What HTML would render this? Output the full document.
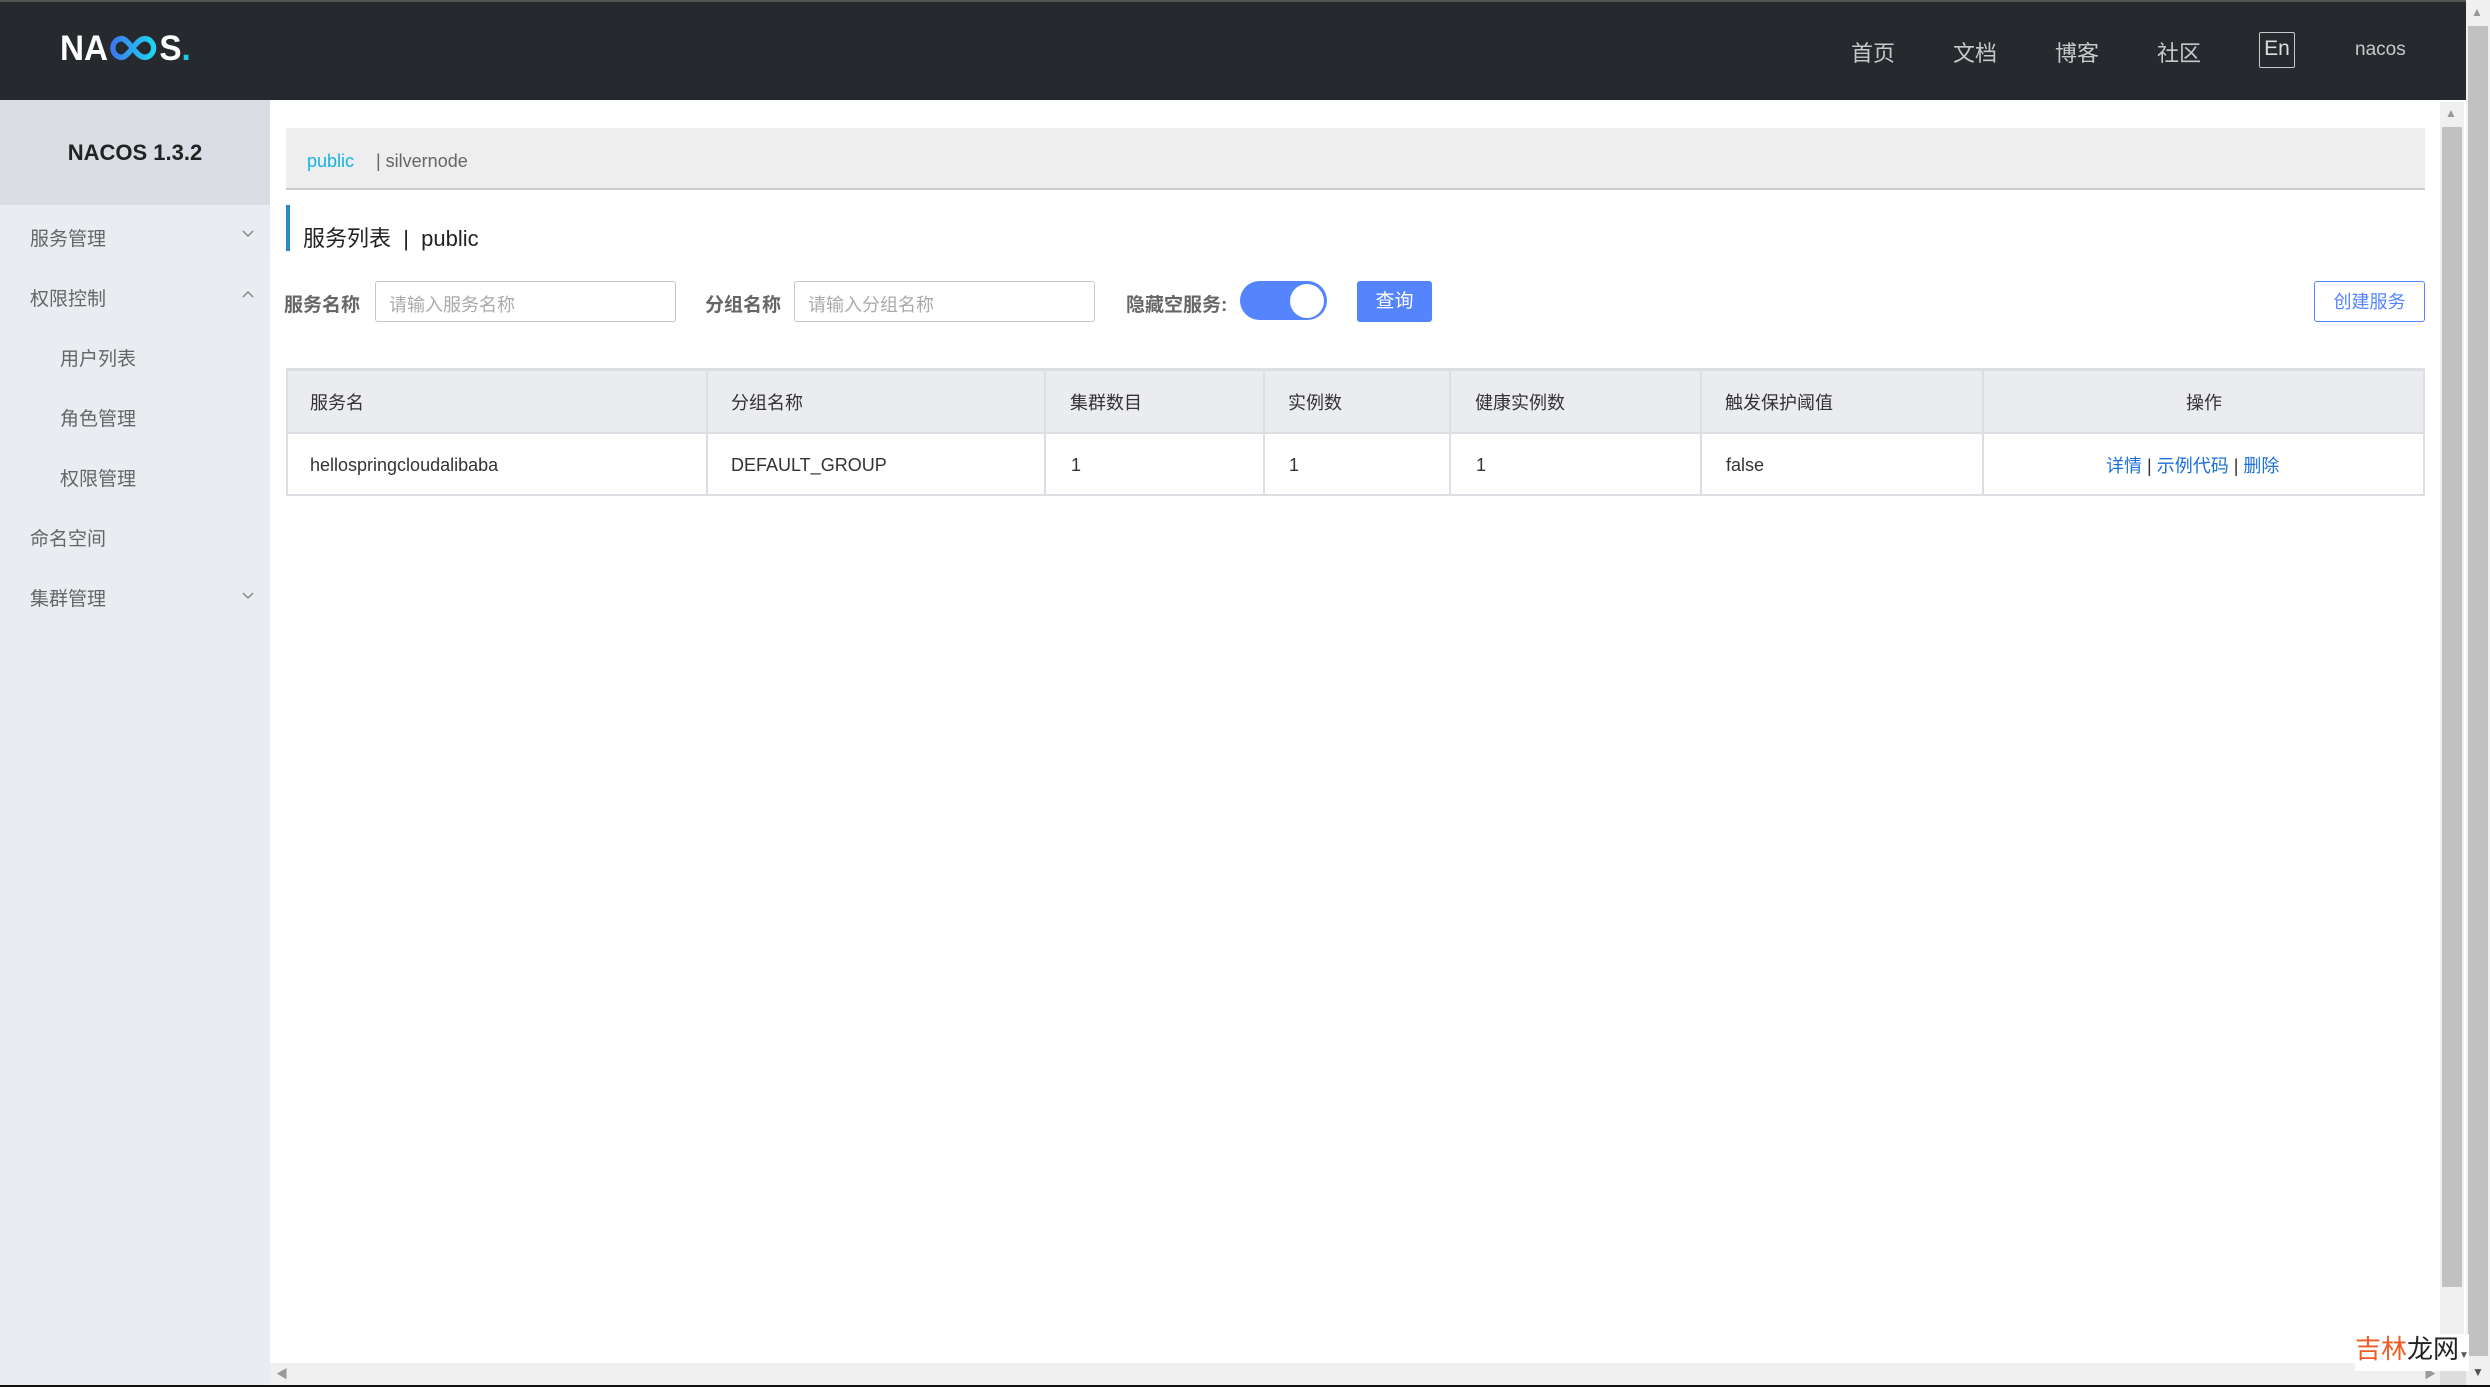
<!DOCTYPE html>
<html><head><meta charset="utf-8"><style>
*{margin:0;padding:0;box-sizing:border-box}
body{width:2490px;height:1387px;overflow:hidden;background:#fff;font-family:"Liberation Sans","Noto Sans CJK SC",sans-serif;position:relative;color:#333}
.a{position:absolute;white-space:nowrap}
.hdr{left:0;top:0;width:2466px;height:100px;background:#262a2f;border-top:2px solid #555}
.nav{top:36px;font-size:22px;color:#c8c8c8}
.side{left:0;top:100px;width:270px;height:1287px;background:#e9ecf1}
.sidetop{left:0;top:100px;width:270px;height:105px;background:#dadde4}
.mi{font-size:19px;color:#666;left:30px}
.sub{left:60px}
.chev{left:242px}
.lbl{font-size:19px;font-weight:bold;color:#666;top:290px}
.inp{height:41px;top:281px;border:1px solid #c4c6cf;border-radius:3px;font-size:18px;color:#aaa;padding:9px 13px}
.th{top:368px;height:65px;background:#ebecf0}
.cell{font-size:18px;color:#333}
.vl{width:2px;background:#dcdee3;top:368px;height:128px}
</style></head><body>
<div class="a hdr"></div>
<div class="a" style="left:60px;top:33px;font-size:35px;font-weight:bold;color:#fff;font-family:'Liberation Sans',sans-serif;line-height:32px;transform:scaleX(0.95);transform-origin:left">NA<svg width="54" height="28" viewBox="0 0 58 28" style="vertical-align:-2px"><defs><linearGradient id="g" x1="0" x2="1"><stop offset="0" stop-color="#3a7bf0"/><stop offset="1" stop-color="#1fd4f0"/></linearGradient></defs><path d="M15 4a10 10 0 1 0 0 20c8 0 16-20 26-20a10 10 0 1 1 0 20c-10 0-18-20-26-20" fill="none" stroke="url(#g)" stroke-width="6"/></svg>S<span style="color:#1fc8e6">.</span></div>
<div class="a nav" style="left:1851px">首页</div>
<div class="a nav" style="left:1953px">文档</div>
<div class="a nav" style="left:2055px">博客</div>
<div class="a nav" style="left:2157px">社区</div>
<div class="a" style="left:2259px;top:32px;width:36px;height:36px;border:1.5px solid #c8c8c8;border-radius:2px;color:#ddd;font-size:21px;text-align:center;line-height:32px">En</div>
<div class="a" style="left:2355px;top:39px;font-size:19px;color:#c8c8c8">nacos</div>
<div class="a side"></div><div class="a sidetop"></div>
<div class="a" style="left:0;width:270px;top:140px;text-align:center;font-size:22px;font-weight:bold;color:#222">NACOS 1.3.2</div>
<div class="a mi" style="top:224px">服务管理</div>
<svg class="a chev" style="top:230px" width="12" height="8"><path d="M1 1l5 5 5-5" fill="none" stroke="#888" stroke-width="1.5"/></svg>
<div class="a mi" style="top:284px">权限控制</div>
<svg class="a chev" style="top:290px" width="12" height="8"><path d="M1 7l5-5 5 5" fill="none" stroke="#888" stroke-width="1.5"/></svg>
<div class="a mi sub" style="top:344px">用户列表</div>
<div class="a mi sub" style="top:404px">角色管理</div>
<div class="a mi sub" style="top:464px">权限管理</div>
<div class="a mi" style="top:524px">命名空间</div>
<div class="a mi" style="top:584px">集群管理</div>
<svg class="a chev" style="top:592px" width="12" height="8"><path d="M1 1l5 5 5-5" fill="none" stroke="#888" stroke-width="1.5"/></svg>
<div class="a" style="left:286px;top:128px;width:2139px;height:62px;background:#eee;border-bottom:2px solid #ccc"></div>
<div class="a" style="left:307px;top:151px;font-size:18px;color:#14b4e0">public</div>
<div class="a" style="left:376px;top:151px;font-size:18px;color:#666">| silvernode</div>
<div class="a" style="left:286px;top:205px;width:4px;height:46px;background:#2a8ac8"></div>
<div class="a" style="left:303px;top:221px;font-size:22px;color:#222">服务列表 &nbsp;|&nbsp; public</div>
<div class="a lbl" style="left:284px">服务名称</div>
<div class="a inp" style="left:375px;width:301px">请输入服务名称</div>
<div class="a lbl" style="left:705px">分组名称</div>
<div class="a inp" style="left:794px;width:301px">请输入分组名称</div>
<div class="a lbl" style="left:1126px">隐藏空服务:</div>
<div class="a" style="left:1240px;top:281px;width:87px;height:39px;border-radius:20px;background:#5584ff"></div>
<div class="a" style="left:1290px;top:284px;width:34px;height:34px;border-radius:50%;background:#fff"></div>
<div class="a" style="left:1357px;top:281px;width:75px;height:41px;border-radius:3px;background:#5584ff;color:#fff;font-size:19px;text-align:center;line-height:41px">查询</div>
<div class="a" style="left:2314px;top:281px;width:111px;height:41px;border-radius:3px;border:1.5px solid #5584ff;color:#5584ff;font-size:18px;text-align:center;line-height:40px">创建服务</div>
<div class="a" style="left:286px;top:368px;width:2139px;height:128px;border:2px solid #dcdee3;border-top:4px solid #dcdee3"></div>
<div class="a th" style="left:288px;width:2135px;top:371px;height:62px"></div>
<div class="a" style="left:288px;top:432px;width:2135px;height:2px;background:#dcdee3"></div>
<div class="a vl" style="left:706px"></div><div class="a vl" style="left:1044px"></div><div class="a vl" style="left:1263px"></div><div class="a vl" style="left:1449px"></div><div class="a vl" style="left:1700px"></div><div class="a vl" style="left:1982px"></div>
<div class="a cell" style="left:310px;top:389px">服务名</div>
<div class="a cell" style="left:731px;top:389px">分组名称</div>
<div class="a cell" style="left:1070px;top:389px">集群数目</div>
<div class="a cell" style="left:1288px;top:389px">实例数</div>
<div class="a cell" style="left:1475px;top:389px">健康实例数</div>
<div class="a cell" style="left:1725px;top:389px">触发保护阈值</div>
<div class="a cell" style="left:2186px;top:389px">操作</div>
<div class="a cell" style="left:310px;top:455px">hellospringcloudalibaba</div>
<div class="a cell" style="left:731px;top:455px">DEFAULT_GROUP</div>
<div class="a cell" style="left:1071px;top:455px">1</div>
<div class="a cell" style="left:1289px;top:455px">1</div>
<div class="a cell" style="left:1476px;top:455px">1</div>
<div class="a cell" style="left:1726px;top:455px">false</div>
<div class="a cell" style="left:2106px;top:452px;color:#1a6fd8;font-size:18px">详情 <span style="color:#333">|</span> 示例代码 <span style="color:#333">|</span> 删除</div>
<div class="a" style="left:2440px;top:102px;width:24px;height:1261px;background:#f0f0f0"></div>
<div class="a" style="left:2442px;top:127px;width:20px;height:1160px;background:#c1c1c1"></div>
<div class="a" style="left:2445px;top:106px;font-size:12px;color:#999">▲</div>
<div class="a" style="left:2466px;top:0;width:24px;height:1387px;background:#f0f0f0"></div>
<div class="a" style="left:2468px;top:26px;width:20px;height:1330px;background:#c1c1c1"></div>
<div class="a" style="left:2471px;top:5px;font-size:12px;color:#999">▲</div>
<div class="a" style="left:2472px;top:1365px;font-size:12px;color:#555">▼</div>
<div class="a" style="left:270px;top:1363px;width:2170px;height:22px;background:#f0f0f0"></div>
<div class="a" style="left:2440px;top:1363px;width:26px;height:22px;background:#ddd"></div>
<div class="a" style="left:276px;top:1365px;font-size:12px;color:#999">◀</div>
<div class="a" style="left:2424px;top:1365px;font-size:12px;color:#999">▶</div>
<div class="a" style="left:0;top:1385px;width:2490px;height:2px;background:#111"></div>
<div class="a" style="left:2355px;top:1334px;font-size:26px;line-height:30px;background:#fff"><span style="color:#f05a23">吉林</span><span style="color:#222">龙网</span><span style="font-size:10px;color:#555">▼</span></div>
</body></html>
